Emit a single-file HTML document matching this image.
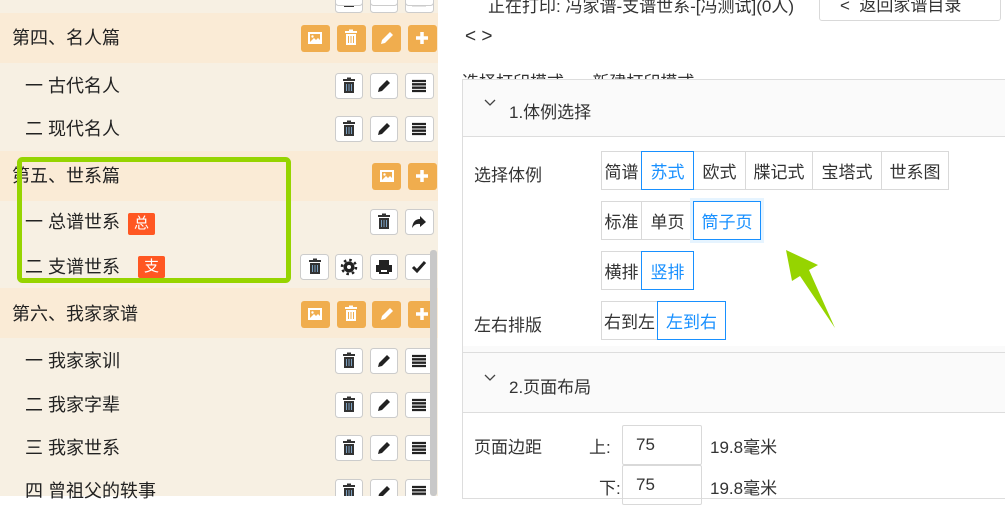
<!DOCTYPE html>
<html><head><meta charset="utf-8"><style>
*{margin:0;padding:0;box-sizing:border-box}
body{width:1005px;height:496px;overflow:hidden;position:relative;background:#fff;font-family:"Liberation Sans","Noto Sans CJK SC",sans-serif;color:#333}
.a{position:absolute}
.left{position:absolute;left:0;top:0;width:438px;height:496px;background:#f7f0e3}
.hd{position:absolute;left:0;width:438px;background:#faebd6}
.t{position:absolute;font-size:18px;color:#222;line-height:20px;white-space:nowrap}
.tag{position:absolute;background:#ff5722;color:#fff;font-size:15px;line-height:22px;padding:0 6px;border-radius:2px}
.g{position:absolute;height:39px;border:1px solid #d9d9d9;font-size:17px;display:flex;align-items:center;justify-content:center;color:#333;background:#fff}
.g.on{border-color:#1890ff;color:#1890ff;z-index:2}
.f{font-size:17px;position:absolute;white-space:nowrap;color:#333}
</style></head><body>
<div class="left">
  <div class="hd" style="top:13px;height:50px"></div>
  <div class="hd" style="top:151px;height:50px"></div>
  <div class="hd" style="top:288px;height:50px"></div>
  <div class="t" style="left:12px;top:28px">第四、名人篇</div>
  <div class="t" style="left:25px;top:76px">一 古代名人</div>
  <div class="t" style="left:25px;top:119px">二 现代名人</div>
  <div class="t" style="left:12px;top:166px">第五、世系篇</div>
  <div class="t" style="left:25px;top:212px">一 总谱世系</div>
  <div class="tag" style="left:128px;top:213px">总</div>
  <div class="t" style="left:25px;top:257px">二 支谱世系</div>
  <div class="tag" style="left:138px;top:256px">支</div>
  <div class="t" style="left:12px;top:304px">第六、我家家谱</div>
  <div class="t" style="left:25px;top:351px">一 我家家训</div>
  <div class="t" style="left:25px;top:395px">二 我家字辈</div>
  <div class="t" style="left:25px;top:438px">三 我家世系</div>
  <div class="t" style="left:25px;top:481px">四 曾祖父的轶事</div>
</div>
<svg class="a" style="left:0;top:0" width="1005" height="496">
<defs>
<g id="img"><rect x="-7" y="-6" width="14" height="12" fill="#fff"/><rect x="-5" y="-4" width="10" height="8" fill="#f0ad4e"/><path d="M-5 4 L-1 0 L1 2 L3 0 L5 2 L5 4Z" fill="#fff"/><circle cx="-2.5" cy="-1.5" r="1.2" fill="#fff"/></g>
<g id="trw"><rect x="-6" y="-7" width="12" height="2" fill="#fff"/><rect x="-2" y="-8.5" width="4" height="2" fill="#fff"/><path d="M-5 -4 H5 V7 H-5Z" fill="#fff"/><path d="M-2.5 -2V5M0 -2V5M2.5 -2V5" stroke="#f0ad4e" stroke-width="1"/></g>
<g id="trk"><rect x="-6" y="-7" width="12" height="2" fill="#333"/><rect x="-2" y="-8.5" width="4" height="2" fill="#333"/><path d="M-5 -4 H5 V7 H-5Z" fill="#333"/><path d="M-2.5 -2V5M0 -2V5M2.5 -2V5" stroke="#7a9fc0" stroke-width="1"/></g>
<g id="pw"><path d="M-6 6 L-5 2 L3 -6 L6 -3 L-2 5Z" fill="#fff"/></g>
<g id="pk"><path d="M-6 6 L-5 2 L3 -6 L6 -3 L-2 5Z" fill="#222"/></g>
<g id="pl"><path d="M-6 0H6M0 -6V6" stroke="#fff" stroke-width="3.5"/></g>
<g id="ls"><path d="M-7 -5H7M-7 -1.7H7M-7 1.7H7M-7 5H7" stroke="#222" stroke-width="2.3"/></g>
</defs>
<g fill="none">
<g transform="translate(0,38)"><rect x="301" y="-13" width="29" height="27" rx="3" fill="#f0ad4e"/><use href="#img" x="315"/><rect x="337" y="-13" width="29" height="27" rx="3" fill="#f0ad4e"/><use href="#trw" x="351"/><rect x="372" y="-13" width="29" height="27" rx="3" fill="#f0ad4e"/><use href="#pw" x="387"/><rect x="408" y="-13" width="29" height="27" rx="3" fill="#f0ad4e"/><use href="#pl" x="422"/></g>
<g transform="translate(0,314)"><rect x="301" y="-13" width="29" height="27" rx="3" fill="#f0ad4e"/><use href="#img" x="315"/><rect x="337" y="-13" width="29" height="27" rx="3" fill="#f0ad4e"/><use href="#trw" x="351"/><rect x="372" y="-13" width="29" height="27" rx="3" fill="#f0ad4e"/><use href="#pw" x="387"/><rect x="408" y="-13" width="29" height="27" rx="3" fill="#f0ad4e"/><use href="#pl" x="422"/></g>
<g transform="translate(0,176)"><rect x="372" y="-13" width="29" height="27" rx="3" fill="#f0ad4e"/><use href="#img" x="387"/><rect x="408" y="-13" width="29" height="27" rx="3" fill="#f0ad4e"/><use href="#pl" x="422"/></g>
<g id="wr"><rect x="335.5" y="-12.5" width="27" height="25" rx="3" fill="#fff" stroke="#ccc"/><use href="#trk" x="349"/><rect x="370.5" y="-12.5" width="27" height="25" rx="3" fill="#fff" stroke="#ccc"/><use href="#pk" x="384"/><rect x="405.5" y="-12.5" width="28" height="25" rx="3" fill="#fff" stroke="#ccc"/><use href="#ls" x="419"/></g>
</g>
<use href="#wr" y="-7"/><use href="#wr" y="86"/><use href="#wr" y="129"/><use href="#wr" y="361"/><use href="#wr" y="405"/><use href="#wr" y="448"/><use href="#wr" y="492"/>
<g transform="translate(0,222)"><rect x="370.5" y="-12.5" width="27" height="25" rx="3" fill="#fff" stroke="#ccc"/><use href="#trk" x="384"/><rect x="405.5" y="-12.5" width="28" height="25" rx="3" fill="#fff" stroke="#ccc"/><path d="M412 6 Q413 -3 420 -3 V-6 L426 0 L420 5 V2 Q415 1 412 6Z" fill="#222"/></g>
<g transform="translate(0,267)"><rect x="300.5" y="-12.5" width="28" height="25" rx="3" fill="#fff" stroke="#ccc"/><use href="#trk" x="315"/><rect x="335.5" y="-12.5" width="27" height="25" rx="3" fill="#fff" stroke="#ccc"/><circle cx="349" cy="0" r="5.5" fill="#222"/><circle cx="349" cy="0" r="7" fill="none" stroke="#222" stroke-width="2.5" stroke-dasharray="2.5 3"/><circle cx="349" cy="0" r="2" fill="#fff"/><rect x="370.5" y="-12.5" width="27" height="25" rx="3" fill="#fff" stroke="#ccc"/><path d="M379 -7H389V-2H379Z M376 -2H392V5H376Z M379 2H389V7H379Z" fill="#222"/><rect x="381" y="3" width="6" height="2" fill="#fff"/><rect x="405.5" y="-12.5" width="28" height="25" rx="3" fill="#fff" stroke="#ccc"/><path d="M413 0 L417 4 L425 -5" stroke="#222" stroke-width="3" fill="none"/></g>
<rect x="430" y="250" width="7" height="246" rx="3" fill="#c8c8c8"/>
<rect x="19.5" y="159.5" width="269" height="121" rx="3" fill="none" stroke="#96d400" stroke-width="5"/>
</svg>

<div class="f" style="left:488px;top:-8px;color:#333">正在打印: 冯家谱-支谱世系-[冯测试](0人)</div>
<div class="a" style="left:819px;top:-10px;width:182px;height:31px;border:1px solid #d9d9d9;border-radius:3px;background:#fff;font-size:17px;line-height:29px;padding-left:20px">&lt;&nbsp;&nbsp;返回家谱目录</div>
<div class="f" style="left:465px;top:26px;font-size:19px">&lt; &gt;</div>
<div class="f" style="left:462px;top:68px">选择打印模式&nbsp;&nbsp;&nbsp;&nbsp;&nbsp;&nbsp;新建打印模式</div>
<div class="a" style="left:462px;top:79px;width:560px;height:420px;border:1px solid #ddd;background:#fff"></div>
<div class="a" style="left:463px;top:80px;width:560px;height:57px;background:#fafafa;border-bottom:1px solid #ddd"></div>
<div class="f" style="left:509px;top:98px">1.体例选择</div>
<div class="f" style="left:474px;top:161px">选择体例</div>
<div class="g" style="left:601px;top:151px;width:41px">简谱</div>
<div class="g on" style="left:641px;top:151px;width:53px">苏式</div>
<div class="g" style="left:693px;top:151px;width:53px">欧式</div>
<div class="g" style="left:745px;top:151px;width:68px">牒记式</div>
<div class="g" style="left:812px;top:151px;width:70px">宝塔式</div>
<div class="g" style="left:881px;top:151px;width:68px">世系图</div>
<div class="g" style="left:601px;top:201px;width:41px">标准</div>
<div class="g" style="left:641px;top:201px;width:53px">单页</div>
<div class="g on" style="left:693px;top:201px;width:68px;box-shadow:0 0 0 3px #e6f4ff">筒子页</div>
<div class="g" style="left:601px;top:251px;width:41px">横排</div>
<div class="g on" style="left:641px;top:251px;width:53px">竖排</div>
<div class="f" style="left:474px;top:311px">左右排版</div>
<div class="g" style="left:601px;top:301px;width:57px">右到左</div>
<div class="g on" style="left:657px;top:301px;width:69px">左到右</div>
<div class="a" style="left:463px;top:346px;width:560px;height:7px;background:#fafafa;border-bottom:1px solid #ddd"></div>
<div class="a" style="left:463px;top:353px;width:560px;height:60px;background:#fafafa;border-bottom:1px solid #ddd"></div>
<div class="f" style="left:509px;top:373px">2.页面布局</div>
<div class="f" style="left:474px;top:433px">页面边距</div>
<div class="f" style="left:589px;top:433px">上:</div>
<div class="a" style="left:622px;top:425px;width:80px;height:40px;border:1px solid #d9d9d9;border-radius:2px;font-size:17px;line-height:38px;padding-left:13px">75</div>
<div class="f" style="left:710px;top:433px">19.8毫米</div>
<div class="f" style="left:599px;top:474px">下:</div>
<div class="a" style="left:622px;top:465px;width:80px;height:40px;border:1px solid #d9d9d9;border-radius:2px;font-size:17px;line-height:38px;padding-left:13px">75</div>
<div class="f" style="left:710px;top:474px">19.8毫米</div>
<svg class="a" style="left:0;top:0" width="1005" height="496">
<path d="M485 100 L490 105 L495 100" stroke="#444" stroke-width="1.3" fill="none"/>
<path d="M485 375 L490 380 L495 375" stroke="#444" stroke-width="1.3" fill="none"/>
<path d="M786 250 L818 265 L809 270 L835 328 L800 276 L792 281Z" fill="#96d400"/></svg>
</body></html>
